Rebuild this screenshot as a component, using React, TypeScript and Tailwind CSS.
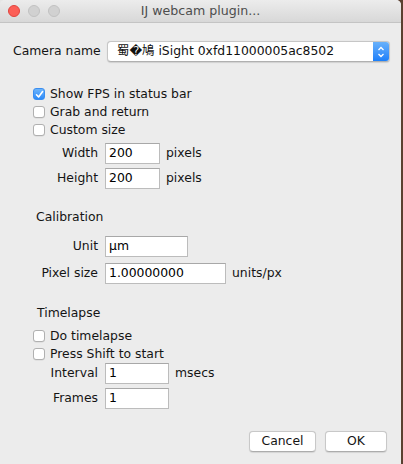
import React from "react";

function Check({ checked, label }: { checked?: boolean; label: string }) {
  return (
    <div className="flex items-center h-[18px]">
      {checked ? (
        <span className="w-[12px] h-[12px] rounded-[3px] bg-gradient-to-b from-[#6cb4fb] to-[#2a8af9] border border-[#3b8ef0] flex items-center justify-center">
          <svg width="9" height="9" viewBox="0 0 9 9">
            <path d="M1.5 4.8 L3.6 7 L7.6 1.6" fill="none" stroke="white" strokeWidth="1.6" strokeLinecap="round" strokeLinejoin="round" />
          </svg>
        </span>
      ) : (
        <span className="w-[12px] h-[12px] rounded-[3px] bg-white border border-[#b0b0b0] shadow-[0_0.5px_0.5px_rgba(0,0,0,0.1)]" />
      )}
      <span className="ml-[5px] text-[#141414]">{label}</span>
    </div>
  );
}

function Field({ label, value, w, suffix, mt }: { label: string; value: string; w: string; suffix?: string; mt: string }) {
  return (
    <div className={`flex items-center ${mt}`}>
      <span className="w-[85px] text-right text-[#141414]">{label}</span>
      <div className={`ml-[7px] h-[21px] ${w} bg-white border border-[#bcbcbc] border-t-[#a8a8a8] flex items-center pl-[3px] text-black`}>
        {value}
      </div>
      {suffix && <span className="ml-[6px] text-[#141414]">{suffix}</span>}
    </div>
  );
}

export default function App() {
  return (
    <div className="w-[403px] h-[464px] bg-gradient-to-r from-[#e6e6e6] to-[#5a4030] overflow-hidden font-['DejaVu_Sans',sans-serif] text-[12.4px] leading-none">
      <div className="w-[401px] h-[464px] bg-[#ececec] rounded-t-[5px] overflow-hidden flex flex-col">
        {/* title bar */}
        <div className="relative h-[23px] border-b border-[#c4c4c4] bg-gradient-to-b from-[#ececec] to-[#d8d8d8] flex items-center">
          <div className="flex items-center gap-[8px] ml-[8px]">
            <span className="w-[12px] h-[12px] rounded-full bg-[#fc5f57] border border-[#e0443e]" />
            <span className="w-[12px] h-[12px] rounded-full bg-[#d1d1d1] border border-[#c1c1c1]" />
            <span className="w-[12px] h-[12px] rounded-full bg-[#d1d1d1] border border-[#c1c1c1]" />
          </div>
          <div className="absolute inset-0 flex items-center justify-center text-[#4d4d4d] text-[12.6px]">
            IJ webcam plugin...
          </div>
        </div>

        <div className="flex flex-col pl-[13px]">
          {/* camera row */}
          <div className="flex items-center mt-[18px]">
            <span className="w-[94px] text-[#141414]">Camera name</span>
            <div className="h-[21px] w-[283px] flex rounded-[4px] border border-[#c6c6c6] border-b-[#b0b0b0] bg-white overflow-hidden shadow-[0_0.5px_1px_rgba(0,0,0,0.12)]">
              <div className="flex-1 flex items-center pl-[9px] text-[#111] font-['DejaVu_Sans','Noto_Sans_CJK_JP',sans-serif]">
                蜀�鳩 iSight 0xfd11000005ac8502
              </div>
              <div className="w-[16px] bg-gradient-to-b from-[#68b1fa] to-[#1a7ffa] flex items-center justify-center">
                <svg width="8" height="14" viewBox="0 0 8 14">
                  <path d="M1.5 5 L4 2.5 L6.5 5" fill="none" stroke="white" strokeWidth="1.3" />
                  <path d="M1.5 9 L4 11.5 L6.5 9" fill="none" stroke="white" strokeWidth="1.3" />
                </svg>
              </div>
            </div>
          </div>

          {/* checks */}
          <div className="flex flex-col ml-[20px] mt-[23px]">
            <Check checked label="Show FPS in status bar" />
            <Check label="Grab and return" />
            <Check label="Custom size" />
          </div>
          <Field label="Width" value="200" w="w-[55px]" suffix="pixels" mt="mt-[4px]" />
          <Field label="Height" value="200" w="w-[55px]" suffix="pixels" mt="mt-[4px]" />

          <div className="ml-[23px] mt-[19px] h-[18px] flex items-center text-[#141414]">Calibration</div>
          <Field label="Unit" value="µm" w="w-[83px]" mt="mt-[10px]" />
          <Field label="Pixel size" value="1.00000000" w="w-[121px]" suffix="units/px" mt="mt-[6px]" />

          <div className="ml-[24px] mt-[20px] h-[18px] flex items-center text-[#141414]">Timelapse</div>
          <div className="flex flex-col ml-[20px] mt-[5px]">
            <Check label="Do timelapse" />
            <Check label="Press Shift to start" />
          </div>
          <Field label="Interval" value="1" w="w-[64px]" suffix="msecs" mt="mt-0" />
          <Field label="Frames" value="1" w="w-[64px]" mt="mt-[4px]" />
        </div>

        <div className="flex justify-end gap-[9px] pr-[14px] mt-[22px]">
          <button className="w-[67px] h-[21px] rounded-[4px] bg-white border border-[#c8c8c8] border-b-[#acacac] shadow-[0_0.5px_1px_rgba(0,0,0,0.1)] text-[#141414] flex items-center justify-center">
            Cancel
          </button>
          <button className="w-[62px] h-[21px] rounded-[4px] bg-white border border-[#c8c8c8] border-b-[#acacac] shadow-[0_0.5px_1px_rgba(0,0,0,0.1)] text-[#141414] flex items-center justify-center">
            OK
          </button>
        </div>
      </div>
    </div>
  );
}
